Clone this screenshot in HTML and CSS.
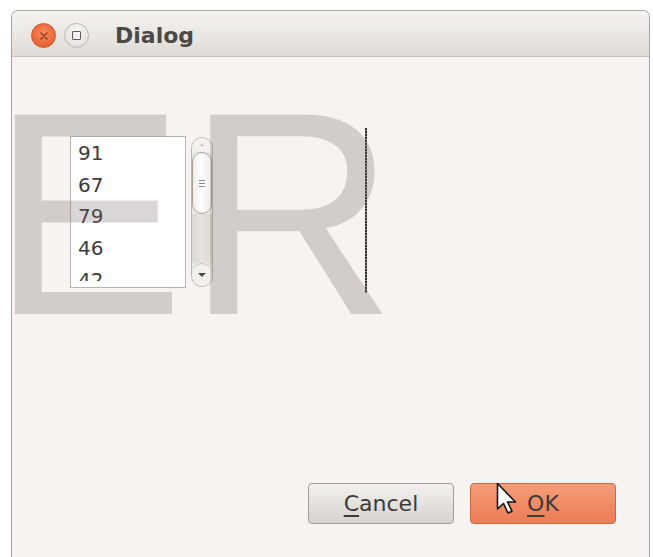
FILE: index.html
```html
<!DOCTYPE html>
<html lang="en">
<head>
<meta charset="utf-8">
<title>Dialog</title>
<link rel="stylesheet" href="styles.css">
</head>
<body>
<div class="window">
  <div class="titlebar">
    <span class="wbtn wbtn-close">
      <svg width="10" height="10" viewBox="0 0 10 10"><path d="M2 2 L8 8 M8 2 L2 8" stroke="#8c3a1c" stroke-width="1.4" stroke-linecap="round"/></svg>
    </span>
    <span class="wbtn wbtn-max"><span class="max-square"></span></span>
    <span class="title">Dialog</span>
  </div>
  <div class="content">
    <div class="row">
      <div class="listbox">
        <div class="list-view">
          <div class="item">91</div>
          <div class="item">67</div>
          <div class="item">79</div>
          <div class="item">46</div>
          <div class="item">42</div>
        </div>
      </div>
      <div class="scrollbar">
        <div class="sb-step sb-up"><span class="arrow-up"></span></div>
        <div class="sb-thumb">
          <span class="grip"></span>
          <span class="grip"></span>
          <span class="grip"></span>
        </div>
        <div class="sb-trough"></div>
        <div class="sb-step sb-down"><span class="arrow-down"></span></div>
      </div>
      <div class="separator"></div>
    </div>
    <div class="actions">
      <button class="button button-cancel"><u>C</u>ancel</button>
      <button class="button button-ok"><u>O</u>K</button>
    </div>
  </div>
  <div class="watermark">ER</div>
  <svg class="cursor" width="24" height="34" viewBox="0 0 24 34">
    <path d="M1.5 1.5 L1.5 27 L7.5 21.5 L12 31 L16 29.2 L11.6 20 L19.5 20 Z" fill="#ffffff" stroke="#111111" stroke-width="1.6" stroke-linejoin="round"/>
  </svg>
</div>
</body>
</html>
```
FILE: styles.css
```css
html, body {
  margin: 0;
  padding: 0;
  background: #ffffff;
}

body {
  width: 653px;
  height: 557px;
  overflow: hidden;
  font-family: "DejaVu Sans", "Liberation Sans", sans-serif;
}

.window {
  position: relative;
  box-sizing: border-box;
  margin: 10px 3px 0 11px;
  width: 639px;
  height: 547px;
  border: 1px solid #aaa6a1;
  border-bottom: none;
  border-radius: 7px 7px 0 0;
  background: #f6f3f0;
  overflow: hidden;
  display: flex;
  flex-direction: column;
}

/* ---- title bar ---- */
.titlebar {
  flex: 0 0 auto;
  box-sizing: border-box;
  height: 46px;
  border-bottom: 1px solid #c4c0bb;
  background: linear-gradient(#f4f2ef, #e9e6e2 60%, #dedad5);
  display: flex;
  align-items: center;
  padding-left: 19px;
  padding-top: 4px;
}

.wbtn {
  box-sizing: border-box;
  width: 25px;
  height: 25px;
  border-radius: 50%;
  display: flex;
  align-items: center;
  justify-content: center;
}

.wbtn-close {
  background: radial-gradient(circle at 50% 40%, #f58a5c, #ec6a38 60%, #d9592b);
  border: 1px solid #c9532a;
}

.wbtn-max {
  margin-left: 8px;
  background: radial-gradient(circle at 50% 35%, #fbfaf9, #e7e4e0 65%, #d3cfca);
  border: 1px solid #bdb8b2;
}

.max-square {
  box-sizing: border-box;
  width: 9px;
  height: 9px;
  border: 1.5px solid #5d5a57;
  border-radius: 1px;
}

.title {
  margin-left: 26px;
  font-weight: bold;
  font-size: 22px;
  color: #4b4946;
  line-height: 1;
}

/* ---- dialog body ---- */
.content {
  flex: 1 1 auto;
  display: flex;
  flex-direction: column;
  padding: 71px 33px 33px 58px;
}

.row {
  display: flex;
  align-items: flex-start;
}

.listbox {
  box-sizing: border-box;
  margin-top: 8px;
  width: 116px;
  height: 152px;
  border: 1px solid #b9b4ae;
  background: #ffffff;
  padding: 1px 0 0 7px;
}

.list-view {
  height: 143px;
  overflow: hidden;
}

.item {
  font-size: 20px;
  line-height: 31.7px;
  color: #3d3b39;
}

.scrollbar {
  box-sizing: border-box;
  margin-top: 9px;
  margin-left: 5px;
  width: 22px;
  height: 150px;
  border: 1px solid #bdb8b2;
  border-radius: 11px;
  background: #ebe8e4;
  display: flex;
  flex-direction: column;
  overflow: hidden;
}

.sb-step {
  flex: 0 0 auto;
  display: flex;
  justify-content: center;
  background: #f3f1ee;
}

.sb-up {
  height: 14px;
  align-items: center;
}

.sb-down {
  height: 22px;
  align-items: center;
  border-top: 1px solid #c9c4be;
  border-radius: 10px 10px 0 0;
}

.arrow-up {
  width: 0;
  height: 0;
  border-left: 2px solid transparent;
  border-right: 2px solid transparent;
  border-bottom: 2px solid #b9b4ae;
}

.arrow-down {
  width: 0;
  height: 0;
  border-left: 4px solid transparent;
  border-right: 4px solid transparent;
  border-top: 4px solid #4a4846;
}

.sb-thumb {
  flex: 0 0 auto;
  box-sizing: border-box;
  height: 62px;
  border: 1px solid #a9a39c;
  border-radius: 10px;
  background: linear-gradient(90deg, #f0eeeb, #ffffff 45%, #efece8);
  display: flex;
  flex-direction: column;
  align-items: center;
  justify-content: center;
  gap: 2px;
}

.grip {
  width: 6px;
  height: 1px;
  background: #8d8883;
}

.sb-trough {
  flex: 1 1 auto;
  background: linear-gradient(90deg, #dcd8d3, #e6e2de 50%, #dcd8d3);
}

.separator {
  margin-left: 152px;
  width: 2px;
  height: 165px;
  background: repeating-linear-gradient(#2f2f2f 0 2px, #8f8c89 2px 3px);
}

/* ---- buttons ---- */
.actions {
  margin-top: auto;
  display: flex;
  justify-content: flex-end;
  gap: 16px;
}

.button {
  box-sizing: border-box;
  width: 146px;
  height: 41px;
  border-radius: 4px;
  font-family: "DejaVu Sans", "Liberation Sans", sans-serif;
  font-size: 22px;
  color: #3d3b39;
  padding: 0;
  display: flex;
  align-items: center;
  justify-content: center;
}

.button u {
  text-decoration-thickness: 1.5px;
  text-underline-offset: 4px;
}

.button-cancel {
  border: 1px solid #a19d98;
  background: linear-gradient(#f3f1ef, #e3e0dc 55%, #d6d2cd);
}

.button-ok {
  border: 1px solid #c96846;
  background: linear-gradient(#f59d7c, #f08a63 55%, #ec7d55);
}

/* ---- overlays ---- */
.watermark {
  position: absolute;
  left: -21px;
  top: 57px;
  font-family: "Liberation Sans", Arial, sans-serif;
  font-size: 290px;
  line-height: 1;
  letter-spacing: 2px;
  color: rgba(115, 105, 98, 0.27);
  pointer-events: none;
  white-space: nowrap;
}

.cursor {
  position: absolute;
  left: 484px;
  top: 471px;
}
```
